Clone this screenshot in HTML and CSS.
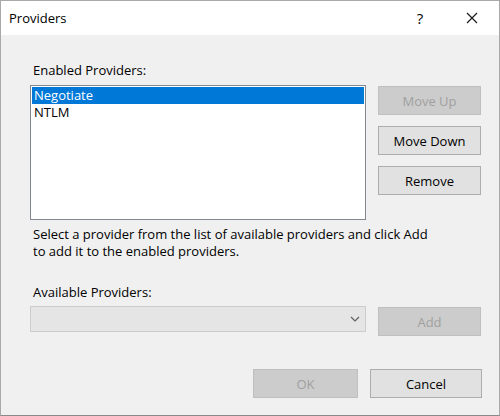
FILE: index.html
```html
<!DOCTYPE html>
<html>
<head>
<meta charset="utf-8">
<link rel="stylesheet" href="styles.css">
</head>
<body>
<div class="window">
  <div class="titlebar">
    <span class="title">Providers</span>
    <span class="help">?</span>
    <span class="close">
      <svg width="12" height="12" viewBox="0 0 12 12"><path d="M1 1L11 11M11 1L1 11" stroke="#1a1a1a" stroke-width="1.2" fill="none"/></svg>
    </span>
  </div>
  <div class="content">
    <div class="label first">Enabled Providers:</div>
    <div class="row">
      <div class="listbox">
        <div class="item selected">Negotiate</div>
        <div class="item">NTLM</div>
      </div>
      <div class="side">
        <button class="btn disabled">Move Up</button>
        <button class="btn">Move Down</button>
        <button class="btn">Remove</button>
      </div>
    </div>
    <div class="help-text">Select a provider from the list of available providers and click Add<br>to add it to the enabled providers.</div>
    <div class="label avail">Available Providers:</div>
    <div class="row combo-row">
      <div class="combo">
        <svg width="10" height="6" viewBox="0 0 10 6"><path d="M1 1L5 5L9 1" stroke="#606060" stroke-width="1.2" fill="none"/></svg>
      </div>
      <button class="btn disabled add">Add</button>
    </div>
    <div class="footer">
      <button class="btn disabled ok">OK</button>
      <button class="btn cancel">Cancel</button>
    </div>
  </div>
</div>
</body>
</html>
```

FILE: styles.css
```css
html, body {
  margin: 0;
  padding: 0;
  background: #f0f0f0;
}
body {
  font-family: "Open Sans", "Noto Sans", sans-serif;
  font-size: 13px;
  color: #000000;
}
.window {
  width: 500px;
  height: 416px;
  box-sizing: border-box;
  border: 1px solid #a9a9a9;
  border-bottom-color: #8a8a8a;
  background: #f0f0f0;
  display: flex;
  flex-direction: column;
}
.titlebar {
  height: 34px;
  background: #ffffff;
  display: flex;
  align-items: center;
  flex-shrink: 0;
}
.title {
  margin-left: 8px;
  font-size: 13px;
  flex: 1;
  padding-bottom: 1px;
}
.help {
  width: 12px;
  font-size: 15px;
  text-align: center;
  margin-right: 40px;
}
.close {
  display: flex;
  margin-right: 21px;
}
.content {
  padding-left: 29px;
  padding-right: 17px;
  display: flex;
  flex-direction: column;
}
.label {
  line-height: 16px;
  padding-left: 3px;
}
.label.first {
  margin-top: 27px;
}
.row {
  display: flex;
  gap: 12px;
  align-items: flex-start;
}
.listbox {
  margin-top: 7px;
  width: 336px;
  height: 135px;
  box-sizing: border-box;
  border: 1px solid #828790;
  background: #ffffff;
  padding: 1px;
}
.item {
  height: 17px;
  line-height: 17px;
  padding-left: 2px;
}
.item.selected {
  background: #0078d7;
  color: #ffffff;
}
.side {
  margin-top: 8px;
  display: flex;
  flex-direction: column;
  gap: 11px;
}
.btn {
  width: 103px;
  height: 29px;
  box-sizing: border-box;
  border: 1px solid #adadad;
  background: #e1e1e1;
  font-family: inherit;
  font-size: 13px;
  color: #000000;
  padding: 0;
}
.btn.disabled {
  background: #cccccc;
  border-color: #bfbfbf;
  color: #a0a0a0;
}
.help-text {
  margin-top: 6px;
  line-height: 17px;
  padding-left: 3px;
}
.label.avail {
  margin-top: 24px;
}
.combo-row {
  margin-top: 6px;
}
.combo {
  width: 336px;
  height: 26px;
  box-sizing: border-box;
  border: 1px solid #cccccc;
  background: #e5e5e5;
  display: flex;
  align-items: center;
  justify-content: flex-end;
  padding-right: 5px;
}
.add {
  margin-top: 1px;
}
.footer {
  margin-top: 33px;
  display: flex;
  justify-content: flex-end;
  gap: 12px;
}
.ok {
  width: 105px;
}
.cancel {
  width: 112px;
  border-color: #adadad;
}
```
